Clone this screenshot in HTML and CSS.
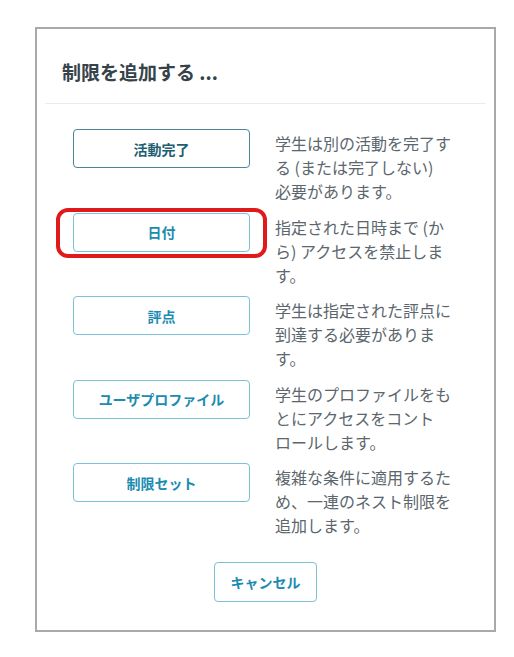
FILE: index.html
```html
<!DOCTYPE html>
<html lang="ja">
<head>
<meta charset="utf-8">
<link rel="stylesheet" href="styles.css">
</head>
<body>
<div class="dialog">
  <div class="dialog-header">
    <h2 class="title">制限を追加する ...</h2>
  </div>
  <div class="dialog-body">
    <div class="row">
      <div class="btn-cell"><button class="btn btn-active">活動完了</button></div>
      <p class="desc">学生は別の活動を完了する (または完了しない) 必要があります。</p>
    </div>
    <div class="row">
      <div class="btn-cell"><button class="btn">日付</button><span class="highlight"></span></div>
      <p class="desc">指定された日時まで (から) アクセスを禁止します。</p>
    </div>
    <div class="row">
      <div class="btn-cell"><button class="btn">評点</button></div>
      <p class="desc">学生は指定された評点に到達する必要があります。</p>
    </div>
    <div class="row">
      <div class="btn-cell"><button class="btn">ユーザプロファイル</button></div>
      <p class="desc">学生のプロファイルをもとにアクセスをコントロールします。</p>
    </div>
    <div class="row">
      <div class="btn-cell"><button class="btn">制限セット</button></div>
      <p class="desc">複雑な条件に適用するため、一連のネスト制限を追加します。</p>
    </div>
  </div>
  <div class="dialog-footer">
    <button class="btn btn-cancel">キャンセル</button>
  </div>
</div>
</body>
</html>
```
FILE: styles.css
```css
html, body {
  margin: 0;
  padding: 0;
  background: #ffffff;
}
body {
  font-family: "Noto Sans CJK JP", "Noto Sans", sans-serif;
  padding: 27px 0 0 35px;
}
.dialog {
  border: 2px solid #a9a9a9;
  padding: 0 8px;
  box-sizing: content-box;
  width: 441px;
}
.dialog-header {
  padding: 31px 17px 19px;
  border-bottom: 1px solid #e6ecef;
}
.title {
  margin: 0;
  font-size: 19px;
  line-height: 24px;
  font-weight: 700;
  color: #36434a;
}
.dialog-body {
  padding: 25px 0 0 28px;
}
.row {
  display: flex;
  gap: 25px;
  align-items: flex-start;
  margin-bottom: 9.5px;
}
.row:last-child {
  margin-bottom: 0;
}
.btn-cell {
  position: relative;
  flex: none;
  width: 177px;
}
.btn {
  font-family: inherit;
  width: 177px;
  height: 39px;
  background: #fff;
  border: 1px solid #79c2d8;
  border-radius: 4px;
  color: #1b8cb0;
  font-size: 14px;
  font-weight: 700;
  padding: 0;
  cursor: pointer;
}
.btn-active {
  border-color: #4a8695;
  color: #215e70;
}
.highlight {
  position: absolute;
  left: -17px;
  right: -17px;
  top: -5px;
  bottom: -6px;
  border: 4px solid #e01a1a;
  border-radius: 12px;
  pointer-events: none;
}
.desc {
  margin: 0;
  padding-top: 2px;
  width: 176.5px;
  font-size: 16px;
  line-height: 24px;
  color: #5b666d;
  line-break: strict;
}
.dialog-footer {
  display: flex;
  justify-content: center;
  padding: 25px 0 28px;
}
.btn-cancel {
  width: 103px;
  height: 40px;
}
```
